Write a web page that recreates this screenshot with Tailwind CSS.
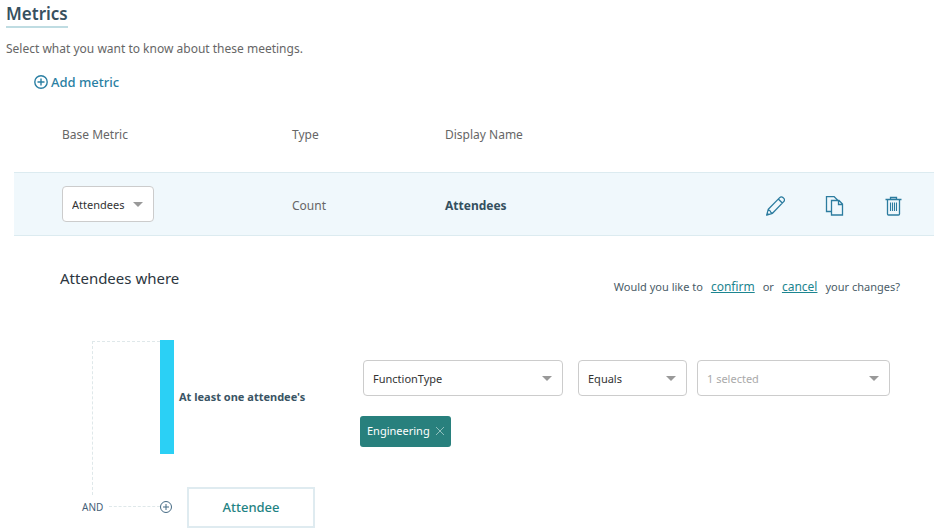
<!DOCTYPE html>
<html lang="en">
<head>
<meta charset="utf-8">
<meta name="viewport" content="width=device-width, initial-scale=1">
<title>Metrics</title>
<script src="https://cdn.jsdelivr.net/npm/@tailwindcss/browser@4"></script>
</head>
<body class="bg-white font-['Noto_Sans',sans-serif] text-[13px] leading-5 text-[#666]">
<main>
  <header class="px-[6px] pt-px">
    <h1 class="inline-block border-b-2 border-[#bfdce2] text-[17px] leading-[25px] font-semibold text-[#37505f]">Metrics</h1>
    <p class="mt-[11px] text-[12px]">Select what you want to know about these meetings.</p>
    <button type="button" class="mt-[13px] ml-7 flex items-center gap-[3px] font-medium text-[#2a7fa3]">
      <svg class="size-[14px]" viewBox="0 0 14 14" fill="none" stroke="currentColor" stroke-width="1.4" aria-hidden="true"><circle cx="7" cy="7" r="6.2"/><path d="M7 3.5v7M3.5 7h7"/></svg>
      Add metric
    </button>
  </header>

  <div class="mt-[18px] pr-[7px] pl-[14px]">
    <table class="w-full table-fixed border-collapse text-left">
      <colgroup><col class="w-[278px]"><col class="w-[153px]"><col><col class="w-[200px]"></colgroup>
      <thead>
        <tr class="h-[62px] text-[12px]">
          <th scope="col" class="pb-3 pl-12 font-normal">Base Metric</th>
          <th scope="col" class="pb-3 font-normal">Type</th>
          <th scope="col" class="pb-3 font-normal">Display Name</th>
          <td></td>
        </tr>
      </thead>
      <tbody>
        <tr class="h-[63px] border-y border-[#dcebf0] bg-[#f0f8fc] text-[12px]">
          <td class="pl-12">
            <div class="relative w-[92px]">
              <select aria-label="Base metric" class="h-9 w-full appearance-none rounded-[4px] border border-[#ccc] bg-white pt-[2px] pl-[9px] text-[11px] text-[#333]"><option>Attendees</option></select>
              <svg class="pointer-events-none absolute top-4 right-[11px] h-[5px] w-[10px]" viewBox="0 0 10 5" fill="#999" aria-hidden="true"><path d="M0 0h10L5 5z"/></svg>
            </div>
          </td>
          <td class="pt-[4px]">Count</td>
          <td class="pt-[4px] font-bold text-[#34505f]">Attendees</td>
          <td class="pt-[4px] pr-[31px]">
            <div class="flex justify-end gap-10 text-[#2c7c9f]">
              <button type="button" aria-label="Edit"><svg class="h-5 w-[19px]" viewBox="0 0 19 20" fill="none" stroke="currentColor" stroke-width="1.3" stroke-linejoin="round" aria-hidden="true"><path d="M.7 19.200l1.600-6L13.700 1.600c1-1 2.300-1 3.200-.1l.9.900c.9.900.9 2.200-.1 3.200L6.500 17.300zM2.300 13.200c.3 1.200 1 1.600 1.800 1.700.2 1.100 1 2 2.400 2.400M12.300 3l4 4"/><path d="M.7 19.200l.7-2.800 2 2z" fill="currentColor" stroke="none"/></svg></button>
              <button type="button" aria-label="Duplicate"><svg class="h-5 w-[19px]" viewBox="0 0 19 20" fill="none" stroke="currentColor" stroke-width="1.3" aria-hidden="true"><path d="M6 15.500H1.500v-15H9L13 4.500M6.500 4.500H14l3.500 3.500v11h-11zM13.500 4.500v4h4"/></svg></button>
              <button type="button" aria-label="Delete"><svg class="h-5 w-[19px]" viewBox="0 0 19 20" fill="none" stroke="currentColor" stroke-width="1.3" aria-hidden="true"><path d="M1.500 3.500h16M6.500 3.500v-2h6v2M3.500 4v14q0 1 1 1h10q1 0 1-1V4"/><path stroke-width="1.1" d="M6.500 6.500v8.500M8.500 6.500v8.500M10.500 6.500v8.500M12.500 6.500v8.500"/></svg></button>
            </div>
          </td>
        </tr>
      </tbody>
    </table>
  </div>

  <section class="mt-[31px] pr-[41px] pl-[60px]">
    <div class="flex justify-between">
      <h2 class="text-[15px] leading-[22px] text-[#2c3640]">Attendees where</h2>
      <p class="mt-[10px] flex items-baseline gap-2 text-[11px] text-[#4a5c68]">Would you like to <a href="#confirm" class="text-[12px] text-[#1c8590] underline">confirm</a> or <a href="#cancel" class="text-[12px] text-[#1c8590] underline">cancel</a> your changes?</p>
    </div>
  </section>

  <section class="mt-[43px] flex pr-[51px] pl-[82px]" aria-label="Attendee filter">
    <div class="w-[78px] pt-px">
      <div class="ml-[10px] h-[154px] border-t border-l border-dashed border-[#dfe8ea]"></div>
      <div class="flex h-6 items-center gap-[6px] text-[10px] text-[#456078]">AND<span class="flex-1 border-t border-dashed border-[#dfe8ea]"></span></div>
    </div>
    <div class="flex-1">
      <div class="flex h-[114px]">
        <div class="w-[14px] bg-[#2bd0f5]"></div>
        <div class="w-[186px] self-center pl-[5px] text-[11px] font-bold text-[#3a5464]">At least one attendee's</div>
        <div class="flex-1 pt-5">
          <div class="flex pl-[3px]">
            <div class="relative w-[200px]">
              <select aria-label="Attribute" class="h-9 w-full appearance-none rounded-[4px] border border-[#ccc] bg-white pt-[2px] pl-[9px] text-[11px] text-[#333]"><option>FunctionType</option></select>
              <svg class="pointer-events-none absolute top-4 right-[11px] h-[5px] w-[10px]" viewBox="0 0 10 5" fill="#999" aria-hidden="true"><path d="M0 0h10L5 5z"/></svg>
            </div>
            <div class="relative ml-[15px] w-[109px]">
              <select aria-label="Operator" class="h-9 w-full appearance-none rounded-[4px] border border-[#ccc] bg-white pt-[2px] pl-[9px] text-[11px] text-[#333]"><option>Equals</option></select>
              <svg class="pointer-events-none absolute top-4 right-[11px] h-[5px] w-[10px]" viewBox="0 0 10 5" fill="#999" aria-hidden="true"><path d="M0 0h10L5 5z"/></svg>
            </div>
            <div class="relative ml-[10px] flex-1">
              <select aria-label="Values" class="h-9 w-full appearance-none rounded-[4px] border border-[#ccc] bg-white pt-[2px] pl-[9px] text-[11px] text-[#aaa]"><option>1 selected</option></select>
              <svg class="pointer-events-none absolute top-4 right-[11px] h-[5px] w-[10px]" viewBox="0 0 10 5" fill="#999" aria-hidden="true"><path d="M0 0h10L5 5z"/></svg>
            </div>
          </div>
          <div class="mt-5 inline-flex h-[31px] items-center gap-[6px] rounded-[3px] bg-[#28807d] px-[7px] text-[11px] text-white">Engineering
            <button type="button" aria-label="Remove Engineering"><svg class="size-2" viewBox="0 0 8 8" stroke="#8fbfbd" stroke-width="1" aria-hidden="true"><path d="M0 0l8 8M8 0L0 8"/></svg></button>
          </div>
        </div>
      </div>
      <div class="mt-[33px] flex items-center gap-[15px]">
        <button type="button" aria-label="Add condition" class="text-[#456a84]"><svg class="size-3" viewBox="0 0 12 12" fill="none" stroke="currentColor" aria-hidden="true"><circle cx="6" cy="6" r="5.5"/><path d="M6 3v6M3 6h6"/></svg></button>
        <button type="button" class="h-[41px] w-32 border-2 border-[#dfebf0] font-medium text-[#1f8383]">Attendee</button>
      </div>
    </div>
  </section>
</main>
</body>
</html>
